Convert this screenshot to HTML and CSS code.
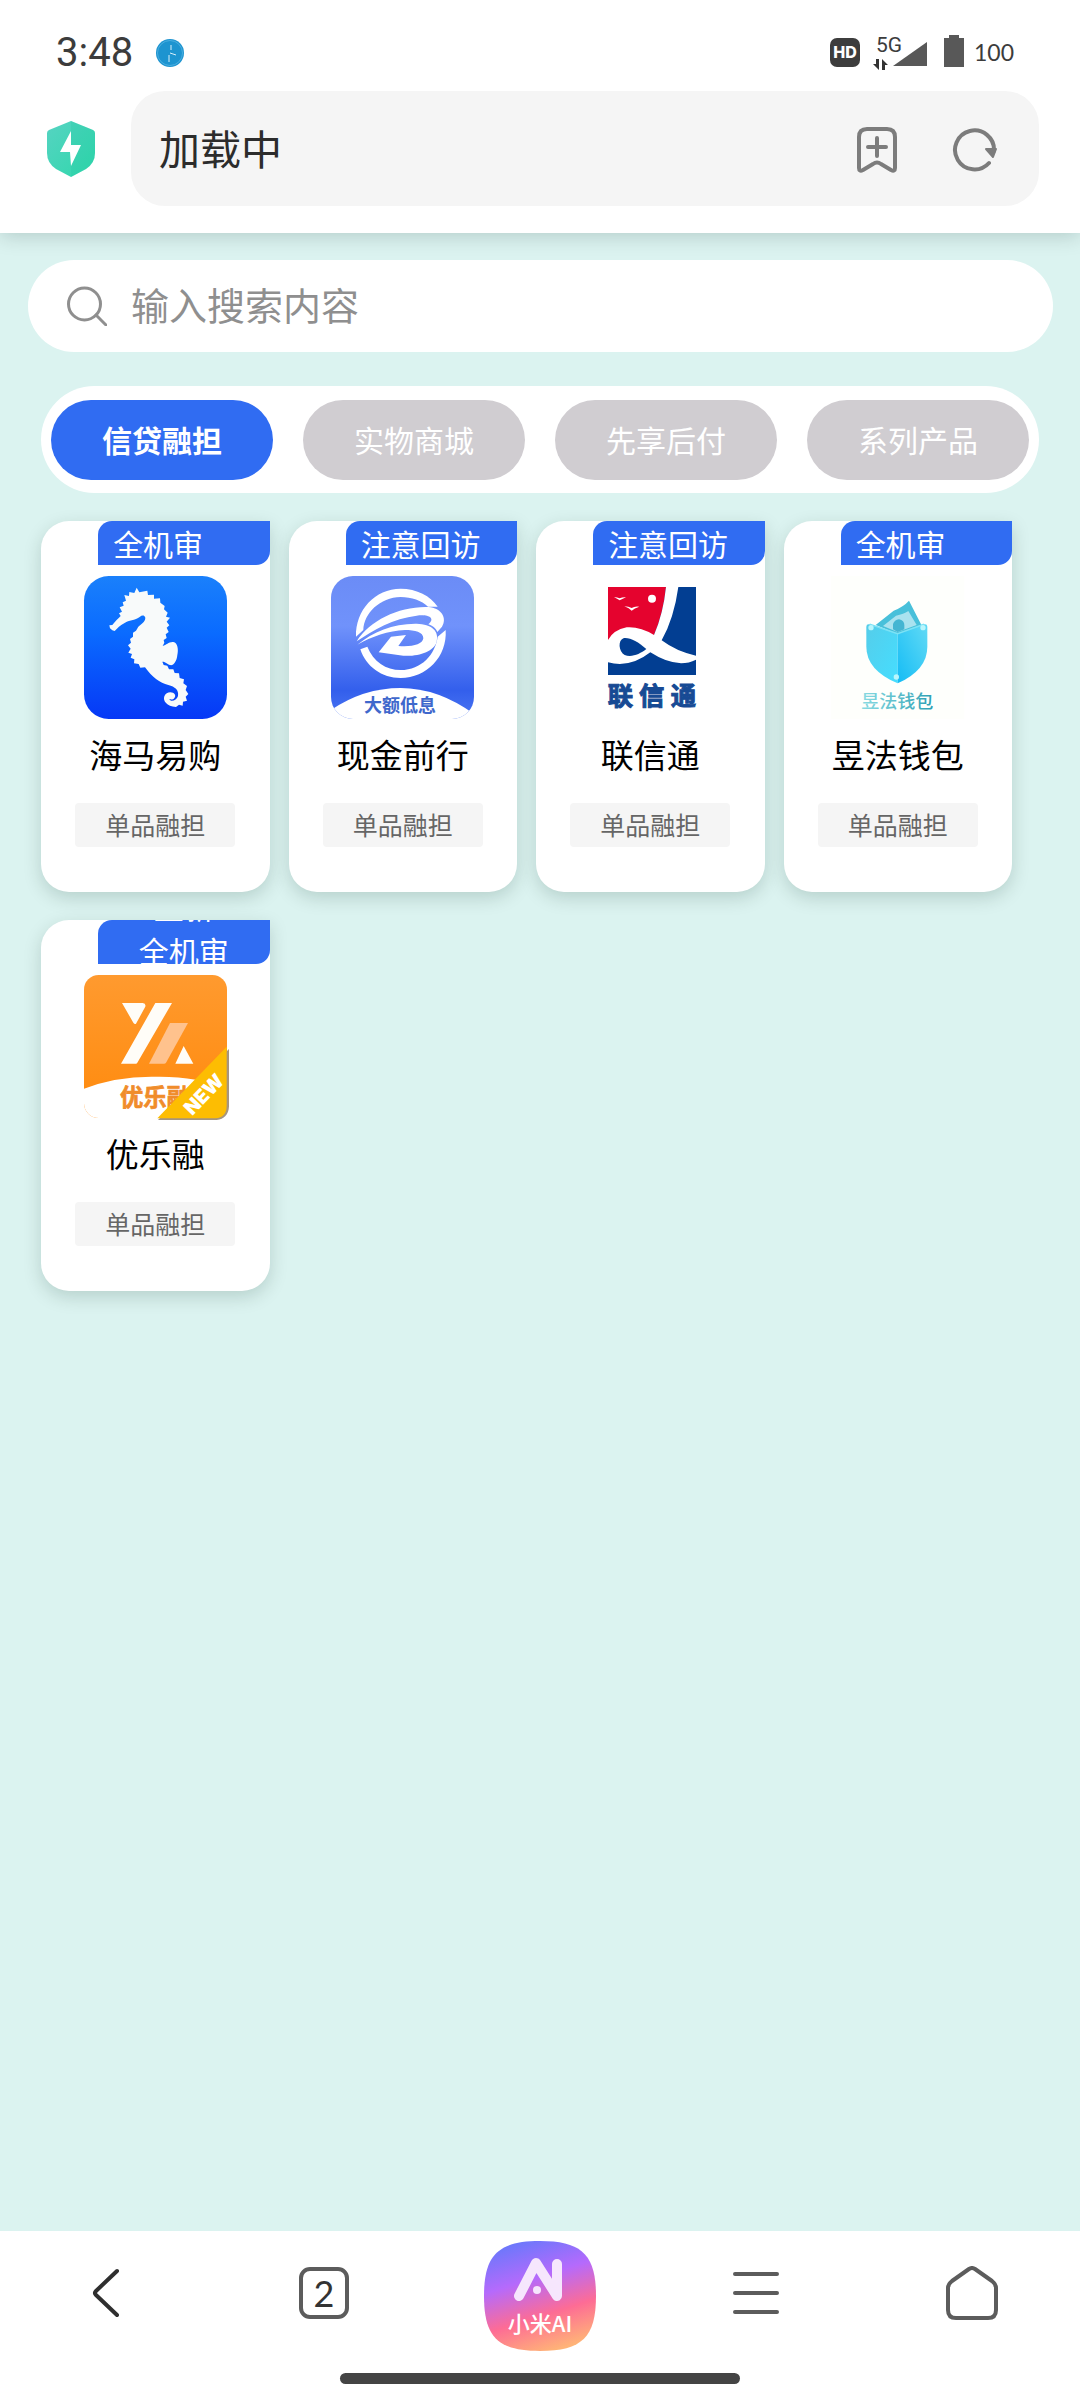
FILE: index.html
```html
<!DOCTYPE html>
<html lang="zh-CN">
<head>
<meta charset="utf-8">
<meta name="viewport" content="width=device-width, initial-scale=1">
<title>加载中</title>
<link rel="stylesheet" href="styles.css">
</head>
<body>
<header class="top">
  <div class="status">
    <span class="clock">3:48</span>
    <svg class="dial" viewBox="0 0 30 30" aria-hidden="true"><circle cx="15" cy="15" r="14" fill="#1d94d0"/><circle cx="15" cy="15" r="12.500" fill="none" stroke="#4aaee0" stroke-width="1"/><path d="M16 7v5M15 15l6 2M14 17v7" stroke="#d9f0fa" stroke-width="1" fill="none"/></svg>
    <span class="hd">HD</span>
    <svg class="signal" viewBox="0 0 56 44" aria-hidden="true"><text class="net" x="3" y="21">5G</text><path d="M54 11v24H20z" fill="#585858"/><path d="M6 28v11L0 33h3V28zM9 39V28l6 6h-3v5z" fill="#333"/></svg>
    <svg class="battery" viewBox="0 0 22 34" aria-hidden="true"><path d="M6 1h10v3h5v29H1V4h5z" fill="#585858"/></svg>
    <span class="level">100</span>
  </div>
  <div class="browser">
    <svg class="shield" viewBox="0 0 48 56" aria-hidden="true">
      <defs><linearGradient id="sh" x1="0" y1="0" x2="1" y2="1"><stop offset="0" stop-color="#56d3c2"/><stop offset="1" stop-color="#2fd8ab"/></linearGradient></defs>
      <path d="M24 0l22 9q2 1 2 3v20q0 10-9 16L24 56 9 48Q0 42 0 32V12q0-2 2-3z" fill="url(#sh)"/>
      <path d="M24 0l22 9q2 1 2 3v20q0 10-9 16L24 56z" fill="#1fc29e" opacity=".2"/>
      <path d="M24 10L13 31h10l1 14 10-21H24z" fill="#fff"/>
    </svg>
    <div class="address">
      <span class="page-name">加载中</span>
      <button class="tool" aria-label="收藏"><svg viewBox="0 0 48 48"><path d="M14 4h20q8 0 8 8v31q0 4-4 2L28 39q-4-3-8 0l-10 6q-4 2-4-2V12q0-8 8-8zM24 13v18M15 22h18" /></svg></button>
      <button class="tool" aria-label="刷新"><svg viewBox="0 0 48 48"><path d="M38 38A19.500 19.500 0 1 1 43 26"/><path d="M35 24h10l-3 8z" fill="#7c7c7c" stroke-width="2"/></svg></button>
    </div>
  </div>
</header>

<main class="content">
  <label class="search">
    <svg viewBox="0 0 40 40" aria-hidden="true"><circle cx="17.500" cy="18" r="16"/><path d="M29 29l10 10"/></svg>
    <input type="search" placeholder="输入搜索内容" aria-label="输入搜索内容">
  </label>

  <nav class="tabs">
    <button class="tab active">信贷融担</button>
    <button class="tab">实物商城</button>
    <button class="tab">先享后付</button>
    <button class="tab">系列产品</button>
  </nav>

  <section class="grid">
    <a class="card" href="#">
      <span class="badge"><span class="line">全机审</span></span>
      <svg class="logo" viewBox="162 198 429 429" aria-hidden="true">
        <defs><linearGradient id="g1" x1="0" y1="0" x2="0" y2="1"><stop offset="0" stop-color="#1a80fb"/><stop offset=".4" stop-color="#0a6bff"/><stop offset="1" stop-color="#0638f6"/></linearGradient></defs>
        <rect x="162" y="198" width="429" height="429" rx="74" fill="url(#g1)"/>
        <path fill="#f8fafa" d="M320 233L328 247 352 242 354 255 372 254 372 266 390 265 391 278 404 288 402 298 413 308 408 320 420 323 410 335 418 346 410 353 416 366 407 373 410 384 401 390 403 398 398 408C410 405 415 395 430 396C443 398 446 420 442 435C440 455 430 468 420 465C412 463 408 455 397 455L401 465 412 467 417 478 430 478 434 489 447 490 449 504 462 508 460 520 471 528 467 540 475 552 467 560 471 572 459 575 458 587 447 584 438 591C410 590 398 572 403 559C408 545 428 543 435 554C438 563 428 572 418 567C421 577 440 572 444 558C447 540 435 530 415 525C390 520 365 500 345 472L331 473 326 462 312 460 313 448 302 443 306 432 295 428 302 416 294 406 303 398 300 387 309 380 309 368 318 362 325 350C334 342 346 335 346 323C343 314 335 316 330 320C315 332 295 330 285 338C270 345 262 355 254 363L247 361 240 355 238 346 247 345C255 335 265 325 272 318L267 310 276 305 269 292 281 287 278 277 288 272 283 255 297 258 298 246 313 249Z"/>
      </svg>
      <span class="name">海马易购</span>
      <span class="tag">单品融担</span>
    </a>

    <a class="card" href="#">
      <span class="badge"><span class="line">注意回访</span></span>
      <svg class="logo" viewBox="153 198 429 429" aria-hidden="true">
        <defs>
          <linearGradient id="g2" x1="0" y1="0" x2="0" y2="1"><stop offset="0" stop-color="#6b8cf6"/><stop offset=".35" stop-color="#7092fb"/><stop offset=".8" stop-color="#335fec"/><stop offset="1" stop-color="#4b76f2"/></linearGradient>
          <clipPath id="c2"><rect x="153" y="198" width="429" height="429" rx="66"/></clipPath>
        </defs>
        <g clip-path="url(#c2)">
          <rect x="153" y="198" width="429" height="429" fill="url(#g2)"/>
          <path d="M153 600Q250 534 362 534T582 612V627H153z" fill="#fff"/>
        </g>
        <g fill="#fff">
          <path d="M228 380C226 300 285 236 362 236C410 236 452 258 473 290L444 290C425 272 395 261 362 261C300 262 252 310 250 360z"/>
          <path d="M241 418L262 410C280 455 318 480 362 480C425 480 466 432 473 380L497 360C502 440 440 504 362 504C305 504 258 470 241 418z"/>
          <path d="M230 394C270 330 360 288 445 291C485 294 502 325 486 350L472 366C466 352 458 348 445 343C470 322 440 312 410 317C340 325 280 360 230 394z"/>
          <path d="M232 404C280 365 340 340 410 341C455 343 478 362 470 395C462 425 415 440 370 437L296 427L333 380L378 375L355 408C395 412 428 403 430 385C430 366 405 360 375 360C325 362 275 380 232 404z"/>
        </g>
        <text class="logo-text" x="360" y="606" font-size="54" text-anchor="middle" fill="#3f68cc">大额低息</text>
      </svg>
      <span class="name">现金前行</span>
      <span class="tag">单品融担</span>
    </a>

    <a class="card" href="#">
      <span class="badge"><span class="line">注意回访</span></span>
      <svg class="logo" viewBox="147 198 429 429" aria-hidden="true">
        <path d="M234 231H498V495H234z" fill="#023e92"/>
        <path d="M234 231H408Q400 310 372 375L340 400H234z" fill="#e5032e"/>
        <path d="M408 231H445Q432 325 395 391Q440 425 498 437V449Q440 478 361 427Q300 475 234 457V390Q250 360 290 352Q330 349 372 375Q400 310 408 231z" fill="#fff"/>
        <path d="M349 417C325 395 300 382 282 384C262 390 266 425 284 435C305 443 330 432 349 417z" fill="#023e92"/>
        <circle cx="366" cy="266" r="12" fill="#fff"/>
        <path d="M252 261Q262 262 269 265Q278 261 288 262L269 271zM283 289Q296 289 305 294Q314 288 328 290Q313 294 305 302Q298 294 283 289z" fill="#fff"/>
        <text class="logo-text" font-size="76" y="586" fill="#174a94" stroke="#174a94" stroke-width="3"><tspan x="233">联</tspan><tspan x="327">信</tspan><tspan x="422">通</tspan></text>
      </svg>
      <span class="name">联信通</span>
      <span class="tag">单品融担</span>
    </a>

    <a class="card" href="#">
      <span class="badge"><span class="line">全机审</span></span>
      <svg class="logo" viewBox="155 198 429 429" aria-hidden="true">
        <defs>
          <linearGradient id="g4" x1="0" y1="0" x2="1" y2="1"><stop offset="0" stop-color="#55cdea"/><stop offset="1" stop-color="#45deff"/></linearGradient>
          <linearGradient id="g4r" x1="1" y1="0" x2="0" y2="1"><stop offset="0" stop-color="#62daf5"/><stop offset="1" stop-color="#14bcf5"/></linearGradient>
          <linearGradient id="g4t" x1="0" y1="0" x2="1" y2="0"><stop offset="0" stop-color="#8adbe2"/><stop offset="1" stop-color="#2d9fb4"/></linearGradient>
        </defs>
        <rect x="170" y="198" width="400" height="429" fill="#fefffc"/>
        <path d="M304 345L358 302Q388 290 404 272L444 350 370 372z" fill="#48c0da"/>
        <path d="M326 348L365 317Q388 313 402 303L427 345 370 366z" fill="#a9e2ef"/>
        <path d="M356 358V342Q360 330 374 328Q390 332 390 345V358L370 366z" fill="#45b5d2"/>
        <path d="M276 350Q276 341 286 343L370 371V520Q276 480 276 410z" fill="url(#g4)"/>
        <path d="M459 350Q459 341 449 343L370 371V520Q459 480 459 410z" fill="url(#g4r)"/>
        <path d="M286 343L370 371 449 343" stroke="#7ce2f5" stroke-width="5" fill="none"/>
        <g fill="#b9f6fc"><circle cx="290" cy="353" r="8"/><circle cx="446" cy="353" r="8"/><circle cx="366" cy="501" r="8"/></g>
        <text class="logo-text light" x="369" y="595" font-size="54" text-anchor="middle" fill="url(#g4t)">昱法钱包</text>
      </svg>
      <span class="name">昱法钱包</span>
      <span class="tag">单品融担</span>
    </a>

    <a class="card" href="#">
      <span class="badge rolling"><span class="line">上新</span><span class="line">全机审</span></span>
      <svg class="logo" viewBox="162 195 429 429" aria-hidden="true">
        <defs>
          <linearGradient id="g5" x1="0" y1="0" x2="0" y2="1"><stop offset="0" stop-color="#ff9a2f"/><stop offset="1" stop-color="#ff8a0c"/></linearGradient>
          <clipPath id="c5"><rect x="162" y="195" width="429" height="429" rx="44"/></clipPath>
        </defs>
        <g clip-path="url(#c5)">
          <rect x="162" y="195" width="429" height="429" fill="url(#g5)"/>
          <path d="M162 536Q260 498 376 500Q500 498 591 536V624H162z" fill="#fff"/>
        </g>
        <path d="M276 279H338Q350 281 345 292L318 341Q314 344 310 338zM376 279H426L322 458 319 461H273zM461 408L490 461H436z" fill="#fffdf8"/>
        <path d="M420 339H474L408 458Q406 461 402 461H357z" fill="#ffc28d"/>
        <text class="logo-text" x="270" y="588" font-size="70" fill="#f08c2a" stroke="#f08c2a" stroke-width="2">优乐融</text>
        <path d="M597 417V590Q594 626 560 630H384z" fill="#a5957f"/>
        <path d="M590 410V588Q590 622 556 625H382z" fill="#fdbd02"/>
        <text class="new" text-anchor="middle" font-size="58" fill="#fff" transform="translate(536 567) rotate(-46)">NEW</text>
      </svg>
      <span class="name">优乐融</span>
      <span class="tag">单品融担</span>
    </a>
  </section>
</main>

<footer class="bottom">
  <nav class="bar">
    <button aria-label="返回"><svg class="glyph dark" viewBox="0 0 54 54"><path d="M36 5L15 25q-2 2 0 4l21 20"/></svg></button>
    <button aria-label="标签页"><span class="count">2</span></button>
    <button aria-label="小米AI"><svg class="ai" viewBox="0 0 112 110">
      <defs>
        <linearGradient id="ai" x1=".3" y1="0" x2=".62" y2="1"><stop offset="0" stop-color="#6a78fb"/><stop offset=".35" stop-color="#b56afc"/><stop offset=".68" stop-color="#fd6c95"/><stop offset="1" stop-color="#ffb477"/></linearGradient>
      </defs>
      <path d="M56 0C98 0 112 14 112 55S98 110 56 110 0 96 0 55 14 0 56 0z" fill="url(#ai)"/>
      <path d="M35 55L52 22 73 55V23" stroke="#f6e6fd" stroke-width="10" stroke-linecap="round" stroke-linejoin="round" fill="none"/>
      <circle cx="53" cy="49" r="4" fill="#f6e6fd"/>
      <text class="logo-text light" x="56" y="91" font-size="22" text-anchor="middle" fill="#fff">小米AI</text>
    </svg></button>
    <button aria-label="菜单"><svg class="glyph" viewBox="0 0 54 54"><path d="M6 8h42M6 27h42M6 46h42"/></svg></button>
    <button aria-label="主页"><svg class="glyph" viewBox="0 0 54 54"><path d="M24 3q3-2 6 0l17 12q4 3 4 7v22q0 8-8 8H11q-8 0-8-8V22q0-4 4-7z"/></svg></button>
  </nav>
  <div class="handle"></div>
</footer>
</body>
</html>
```
FILE: styles.css
```css
* { box-sizing: border-box; }

body {
  margin: 0;
  min-height: 100vh;
  display: flex;
  flex-direction: column;
  background: #dbf3f0;
  font-family: "Noto Sans CJK SC", sans-serif;
  color: #000;
}

button {
  border: 0;
  padding: 0;
  background: none;
  font: inherit;
  color: inherit;
}

svg { display: block; flex: none; }

/* Status bar and address bar */
.top {
  background: #fff;
  padding-bottom: 27px;
  box-shadow: 0 2px 20px rgba(0, 30, 30, .2);
}

.status {
  display: flex;
  align-items: center;
  height: 91px;
  padding: 14px 66px 0 56px;
  font-family: Roboto, sans-serif;
  color: #3c3c3c;
}
.clock { font-size: 40px; }
.dial { width: 30px; height: 30px; margin-left: 22px; }
.hd {
  margin-left: auto;
  width: 30px;
  height: 29px;
  border-radius: 7px;
  background: #3d3d3d;
  color: #fff;
  font: 800 16px/29px Inter, sans-serif;
  text-align: center;
}
.signal { width: 56px; height: 44px; margin-left: 13px; }
.net { font: 21px Roboto, sans-serif; fill: #3c3c3c; }
.battery { width: 22px; height: 34px; margin: 0 9px 4px 14px; }
.level { font: 23px Lato, sans-serif; width: 40px; padding-bottom: 2px; }

.browser {
  display: flex;
  align-items: center;
  gap: 36px;
  padding: 0 41px 0 47px;
}
.shield { width: 48px; height: 56px; }
.address {
  flex: 1;
  display: flex;
  align-items: center;
  gap: 50px;
  height: 115px;
  padding: 0 40px 0 28px;
  border-radius: 34px;
  background: #f5f5f5;
}
.page-name { flex: 1; padding-bottom: 4px; font-size: 41px; color: #2c2c2c; }
.tool svg {
  width: 48px;
  height: 48px;
  fill: none;
  stroke: #7c7c7c;
  stroke-width: 4;
  stroke-linecap: round;
  stroke-linejoin: round;
}

/* Search and category tabs */
.content { flex: 1; padding-top: 27px; }

.search {
  display: flex;
  align-items: center;
  gap: 24px;
  height: 92px;
  margin: 0 27px 0 28px;
  padding: 0 40px 0 39px;
  border-radius: 46px;
  background: #fff;
}
.search svg {
  width: 40px;
  height: 40px;
  fill: none;
  stroke: #8f8f8f;
  stroke-width: 3;
  stroke-linecap: round;
}
.search input {
  flex: 1;
  min-width: 0;
  border: 0;
  padding: 0 0 4px;
  outline: 0;
  background: none;
  font: inherit;
  font-size: 38px;
  line-height: 56px;
}
.search input::placeholder { color: #8f8f8f; opacity: 1; }

.tabs {
  display: grid;
  grid-template-columns: repeat(4, 1fr);
  gap: 30px;
  margin: 34px 41px 28px;
  padding: 14px 10px 13px;
  border-radius: 54px;
  background: #fff;
}
.tab {
  height: 80px;
  padding-bottom: 3px;
  border-radius: 40px;
  background: #d0cdd1;
  color: #fff;
  font-size: 30px;
}
.tab.active { background: #306cf2; font-weight: 700; }

/* Product cards */
.grid {
  display: grid;
  grid-template-columns: repeat(4, 1fr);
  gap: 28px 19px;
  padding: 0 68px 40px 41px;
}
.card {
  display: flex;
  flex-direction: column;
  align-items: center;
  padding-bottom: 45px;
  border-radius: 28px 0 28px 28px;
  background: #fff;
  box-shadow: 0 6px 18px rgba(0, 40, 30, .17);
  color: inherit;
  text-decoration: none;
}
.badge {
  align-self: flex-end;
  width: 75%;
  height: 44px;
  padding-left: 15px;
  overflow: hidden;
  border-radius: 14px 0 14px 0;
  background: #306cf2;
  color: #fff;
  font-size: 30px;
  line-height: 44px;
}
.line { display: block; }
.rolling { padding: 0; text-align: center; }
.rolling .line:first-child { margin-top: -36px; }
.logo { width: 143px; height: 143px; margin: 11px 0 13px; overflow: visible; }
.logo-text { font-family: "Noto Sans CJK SC", sans-serif; font-weight: 700; }
.logo-text.light { font-weight: 500; }
.new { font-family: Inter, sans-serif; font-weight: 900; }
.name { font-size: 33px; line-height: 44px; }
.tag {
  width: 160px;
  height: 44px;
  margin-top: 27px;
  border-radius: 4px;
  background: #f5f5f5;
  color: #666;
  font-size: 25px;
  line-height: 42px;
  text-align: center;
}

/* Bottom browser bar */
.bottom { background: #fff; padding-bottom: 16px; }
.bar {
  display: grid;
  grid-template-columns: repeat(5, 1fr);
  padding-top: 10px;
}
.bar button {
  display: flex;
  align-items: center;
  justify-content: center;
  height: 110px;
}
.ai { width: 112px; height: 110px; }
.glyph {
  width: 54px;
  height: 54px;
  margin-bottom: 6px;
  fill: none;
  stroke: #5c5c5c;
  stroke-width: 4;
  stroke-linecap: round;
  stroke-linejoin: round;
}
.dark { stroke: #2f2f2f; }
.count {
  width: 50px;
  height: 52px;
  margin-bottom: 6px;
  border: 4px solid #5c5c5c;
  border-radius: 11px;
  color: #333;
  font: 36px/44px Lato, sans-serif;
  text-align: center;
}
.handle {
  width: 37%;
  height: 11px;
  margin: 22px auto 0;
  border-radius: 6px;
  background: #444;
}
```
